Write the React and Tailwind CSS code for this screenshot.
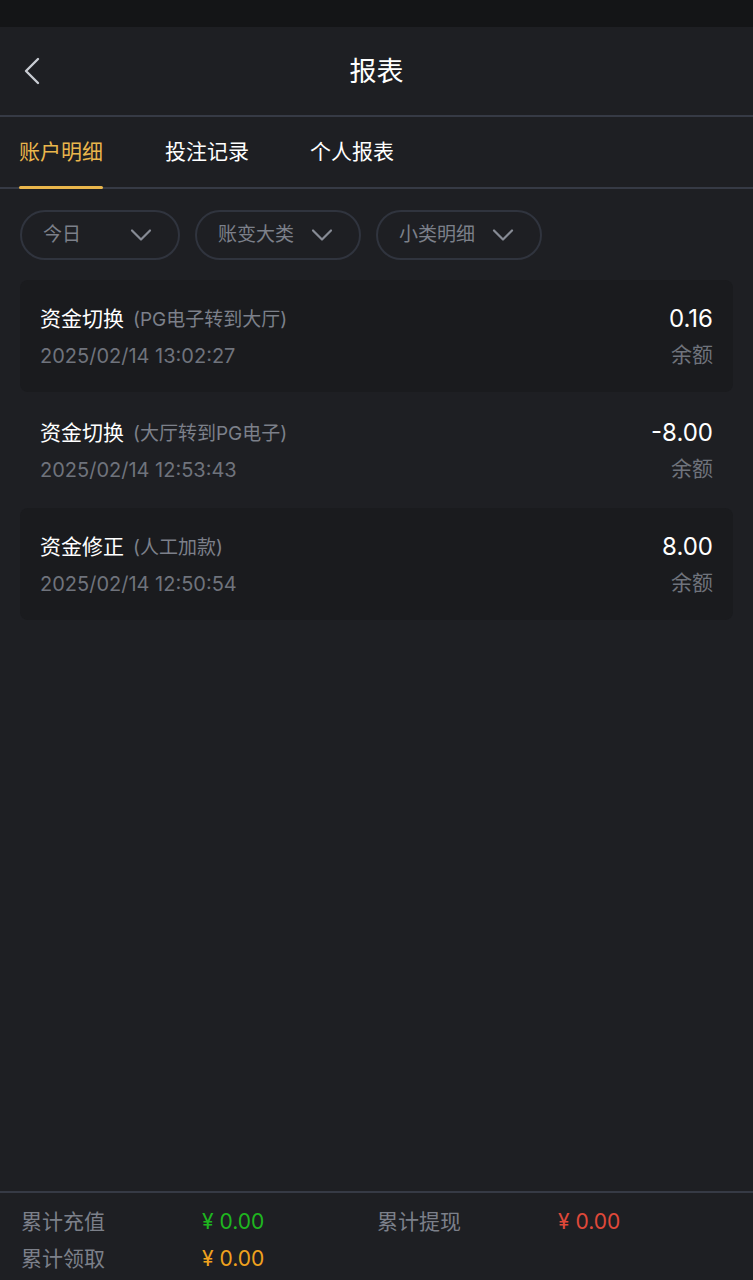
const records = [
    { title: '资金切换', note: '(PG电子转到大厅)', time: '2025/02/14 13:02:27', amount: '0.16', shaded: true },
    { title: '资金切换', note: '(大厅转到PG电子)', time: '2025/02/14 12:53:43', amount: '-8.00', shaded: false },
    { title: '资金修正', note: '(人工加款)', time: '2025/02/14 12:50:54', amount: '8.00', shaded: true },
];

const filters = [
    { label: '今日', width: 'w-[160px]' },
    { label: '账变大类', width: 'w-[166px]' },
    { label: '小类明细', width: 'w-[166px]' },
];

function Chevron() {
    return (
        <svg width="22" height="14" viewBox="0 0 22 14" fill="none">
            <path d="M2 2.5L11 11.5L20 2.5" stroke="#878b95" strokeWidth="2.2" strokeLinecap="round" strokeLinejoin="round" />
        </svg>
    );
}

export default function App() {
    return (
        <div
            className="flex h-[1280px] w-full flex-col bg-[#1e1f23] text-white"
            style={{ fontFamily: 'Inter, "Noto Sans CJK SC", sans-serif' }}
        >
            {/* status bar */}
            <div className="h-[27px] bg-[#141517]" />

            {/* header */}
            <div className="relative flex h-[90px] items-center justify-center border-b-2 border-[#363a45] pt-[3px]">
                <svg className="absolute left-[22px] top-[30px]" width="20" height="28" viewBox="0 0 20 28" fill="none">
                    <path d="M16 2L4 14L16 26" stroke="#c9ccd3" strokeWidth="2.4" strokeLinecap="round" strokeLinejoin="round" />
                </svg>
                <span className="text-[27px]">报表</span>
            </div>

            {/* tabs */}
            <div className="flex h-[72px] border-b-2 border-[#363a45] pl-[19px]">
                <div className="relative flex items-center">
                    <span className="text-[21px] text-[#eab64c]">账户明细</span>
                    <div className="absolute bottom-[-2px] left-0 h-[3px] w-full rounded-full bg-[#eab64c]" />
                </div>
                <div className="ml-[62px] flex items-center text-[21px]">投注记录</div>
                <div className="ml-[61px] flex items-center text-[21px]">个人报表</div>
            </div>

            {/* filters */}
            <div className="flex gap-[15px] px-[20px] pt-[21px]">
                {filters.map((f) => (
                    <div
                        key={f.label}
                        className={`${f.width} flex h-[50px] items-center justify-between rounded-full border-2 border-[#30343e] pl-[21px] pr-[26px]`}
                    >
                        <span className="text-[19px] text-[#7c808a]">{f.label}</span>
                        <Chevron />
                    </div>
                ))}
            </div>

            {/* list */}
            <div className="flex flex-col gap-[2px] px-[20px] pt-[20px]">
                {records.map((r, i) => (
                    <div
                        key={i}
                        className={`flex h-[112px] items-start justify-between rounded-[8px] px-[20px] pt-[24px] ${
                            r.shaded ? 'bg-[#1a1b1e]' : ''
                        }`}
                    >
                        <div className="flex flex-col">
                            <div className="flex items-baseline">
                                <span className="text-[21px] leading-[30px]">{r.title}</span>
                                <span className="ml-[9px] text-[19px] leading-[30px] text-[#7c808a]">{r.note}</span>
                            </div>
                            <span className="mt-[9px] text-[20px] leading-[24px] text-[#6f737c]">{r.time}</span>
                        </div>
                        <div className="flex flex-col items-end">
                            <span className="text-[24px] leading-[30px]">{r.amount}</span>
                            <span className="mt-[9px] text-[21px] leading-[24px] text-[#6f737c]">余额</span>
                        </div>
                    </div>
                ))}
            </div>

            <div className="flex-1" />

            {/* footer totals */}
            <div className="h-[89px] border-t-2 border-[#363a45] px-[21px] pt-[10px] text-[21px] leading-[37px]">
                <div className="grid grid-cols-[181px_175px_181px_1fr]">
                    <span className="text-[#7c808a]">累计充值</span>
                    <span className="text-[#1fb61f]">¥ 0.00</span>
                    <span className="text-[#7c808a]">累计提现</span>
                    <span className="text-[#e0493a]">¥ 0.00</span>
                    <span className="text-[#7c808a]">累计领取</span>
                    <span className="text-[#f0a21e]">¥ 0.00</span>
                </div>
            </div>
        </div>
    );
}
